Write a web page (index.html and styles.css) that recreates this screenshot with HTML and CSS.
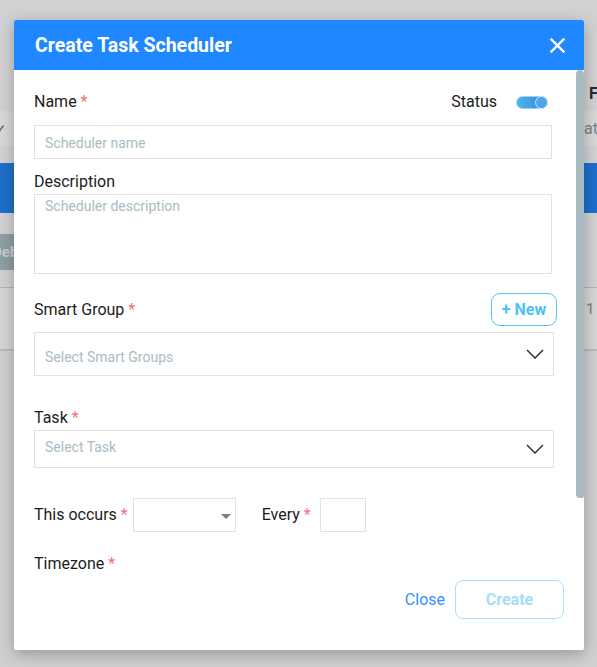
FILE: index.html
```html
<!DOCTYPE html>
<html>
<head>
<meta charset="utf-8">
<link rel="stylesheet" href="styles.css">
</head>
<body>
<div class="page">
  <div class="page-top"><span></span><span class="page-head">Filter</span></div>
  <div class="page-toolbar"><span class="chev">✓</span><span class="at">atus</span></div>
  <div class="page-gap"></div>
  <div class="page-band"></div>
  <div class="page-chiprow"><span class="chip">Debug</span></div>
  <div class="page-row"><span></span><span class="one">1</span></div>
  <div class="page-foot"></div>
</div>

<div class="modal">
  <div class="modal-header">
    <h1 class="modal-title">Create Task Scheduler</h1>
    <button class="modal-close" aria-label="Close">
      <svg width="15" height="15" viewBox="0 0 15 15"><path d="M1.5 1.5 L13.5 13.5 M13.5 1.5 L1.5 13.5" stroke="#fff" stroke-width="2.4" stroke-linecap="square" fill="none"/></svg>
    </button>
  </div>
  <div class="modal-body">
    <div class="row-between name-row">
      <label class="label">Name <span class="req">*</span></label>
      <div class="status">
        <span class="label">Status</span>
        <span class="toggle"><span class="knob"></span></span>
      </div>
    </div>
    <div class="input name-input"><span class="ph">Scheduler name</span></div>

    <label class="label desc-label">Description</label>
    <div class="input textarea"><span class="ph">Scheduler description</span></div>

    <div class="row-between group-row">
      <label class="label">Smart Group <span class="req">*</span></label>
      <button class="btn-new">+ New</button>
    </div>
    <div class="select select-group">
      <span class="ph">Select Smart Groups</span>
      <svg class="chevron" width="18" height="10" viewBox="0 0 18 10"><path d="M1 1 L9 9 L17 1" stroke="#333" stroke-width="1.5" fill="none"/></svg>
    </div>

    <label class="label task-label">Task <span class="req">*</span></label>
    <div class="select select-task">
      <span class="ph">Select Task</span>
      <svg class="chevron" width="18" height="10" viewBox="0 0 18 10"><path d="M1 1 L9 9 L17 1" stroke="#333" stroke-width="1.5" fill="none"/></svg>
    </div>

    <div class="occurs-row">
      <label class="label">This occurs <span class="req">*</span></label>
      <div class="mini-select"><span class="caret"></span></div>
      <label class="label every-label">Every <span class="req">*</span></label>
      <div class="mini-input"></div>
    </div>

    <label class="label tz-label">Timezone <span class="req">*</span></label>

    <div class="footer">
      <button class="btn-close">Close</button>
      <button class="btn-create">Create</button>
    </div>

    <div class="scroll-thumb"></div>
  </div>
</div>
</body>
</html>
```

FILE: styles.css
```css
* { box-sizing: border-box; }
html, body { margin: 0; padding: 0; }
body {
  width: 597px;
  height: 667px;
  overflow: hidden;
  background: #d2d2d4;
  font-family: Roboto, "Liberation Sans", sans-serif;
  position: relative;
}

/* background page (dimmed) */
.page {
  width: 597px;
  height: 667px;
  overflow: hidden;
  display: flex;
  flex-direction: column;
  background: #d2d2d4;
}
.page-top {
  height: 111px;
  display: grid;
  grid-template-columns: 589px 1fr;
  align-items: end;
  padding-bottom: 8px;
}
.page-head {
  font-size: 16px;
  font-weight: 700;
  color: #2a2a2e;
  white-space: nowrap;
}
.page-toolbar {
  height: 35px;
  background: #d8d8d9;
  display: grid;
  grid-template-columns: 584px 1fr;
  align-items: center;
}
.chev {
  font-size: 12px;
  color: #444;
  margin-left: -4px;
}
.at {
  font-size: 16px;
  color: #808083;
  white-space: nowrap;
}
.page-gap { height: 17px; }
.page-band { height: 50px; background: #1e6fcc; }
.page-chiprow {
  height: 75px;
  padding-top: 21px;
  border-bottom: 1px solid #b4b4b6;
}
.chip {
  display: inline-block;
  height: 36px;
  line-height: 36px;
  background: #8e9fa5;
  color: #c8d0d3;
  font-weight: 700;
  font-size: 15px;
  padding: 0 6px;
  margin-left: -14px;
}
.page-row {
  height: 63px;
  background: #d6d6d7;
  display: grid;
  grid-template-columns: 586px 1fr;
  padding-top: 12px;
  border-bottom: 2px solid #bcbcbe;
}
.one { font-size: 15px; color: #7a7a7c; }
.page-foot { flex: 1; background: #d0d0d2; }

/* modal */
.modal {
  position: absolute;
  left: 14px;
  top: 20px;
  width: 570px;
  height: 630px;
  background: #fff;
  border-radius: 2px;
  box-shadow: 0 4px 16px rgba(0, 0, 0, 0.28);
  display: flex;
  flex-direction: column;
  overflow: hidden;
}
.modal-header {
  height: 50px;
  flex: none;
  background: #1f87ff;
  display: flex;
  align-items: center;
  justify-content: space-between;
  padding: 0 19px 0 21px;
}
.modal-title {
  margin: 0;
  font-size: 19.5px;
  font-weight: 700;
  color: #fff;
}
.modal-close {
  border: 0;
  background: none;
  padding: 0;
  width: 15px;
  height: 15px;
  display: flex;
}

.modal-body {
  position: relative;
  flex: 1;
  padding: 22px 30px 0 20px;
  display: flex;
  flex-direction: column;
}
.label {
  font-size: 16px;
  line-height: 20px;
  color: #1c1c1c;
}
.req { color: #f66f7a; }
.ph {
  font-size: 14px;
  color: #a9bbc3;
}
.row-between {
  display: flex;
  justify-content: space-between;
  align-items: center;
}
.name-row { height: 20px; }
.status {
  display: flex;
  align-items: center;
  gap: 19px;
  margin-right: 6px;
}
.toggle {
  position: relative;
  width: 32px;
  height: 13px;
  border-radius: 7px;
  background: linear-gradient(90deg, #52b4ec, #2f86d6);
  border: 1px solid #9ccff3;
  display: flex;
  justify-content: flex-end;
  align-items: center;
}
.knob {
  width: 13px;
  height: 13px;
  border-radius: 50%;
  border: 1.5px solid #cbe7fb;
  background: #4aa6e8;
  margin-right: -1px;
}

.input {
  border: 1px solid #e2e2e2;
  padding: 0 10px;
  display: flex;
}
.name-input {
  margin-top: 13px;
  height: 34px;
  align-items: center;
  margin-right: 2px;
}
.name-input .ph { padding-top: 2px; }
.desc-label { margin-top: 13px; }
.textarea {
  margin-top: 2px;
  height: 80px;
  margin-right: 2px;
  align-items: flex-start;
  padding-top: 3px;
}

.group-row {
  margin-top: 19px;
  height: 33px;
}
.btn-new {
  height: 33px;
  width: 66px;
  border: 1px solid #5bc6f5;
  border-radius: 9px;
  background: #fff;
  color: #4ec2f6;
  font-family: Roboto, "Liberation Sans", sans-serif;
  font-size: 16px;
  font-weight: 700;
  margin-right: -3px;
  padding: 0;
}

.select {
  border: 1px solid #e2e2e2;
  display: flex;
  align-items: center;
  justify-content: space-between;
  padding: 0 9px 0 10px;
}
.chevron { flex: none; }
.select-group {
  margin-top: 6px;
  height: 44px;
}
.select-group .ph { padding-top: 5px; }
.task-label { margin-top: 32px; }
.select-task {
  margin-top: 2px;
  height: 38px;
}
.select-task .ph { padding-bottom: 4px; }

.occurs-row {
  margin-top: 30px;
  height: 34px;
  display: flex;
  align-items: center;
}
.mini-select {
  margin-left: 5px;
  width: 103px;
  height: 34px;
  border: 1px solid #e2e2e2;
  display: flex;
  align-items: center;
  justify-content: flex-end;
  padding-right: 4px;
}
.caret {
  width: 0;
  height: 0;
  border-left: 5px solid transparent;
  border-right: 5px solid transparent;
  border-top: 5px solid #7d7d7d;
  margin-top: 2px;
}
.every-label { margin-left: 26px; }
.mini-input {
  margin-left: 9px;
  width: 46px;
  height: 34px;
  border: 1px solid #e2e2e2;
}

.tz-label { margin-top: 22px; }

.footer {
  margin-top: 6px;
  margin-right: -10px;
  display: flex;
  justify-content: flex-end;
  align-items: center;
  gap: 10px;
}
.btn-close {
  border: 0;
  background: none;
  padding: 0;
  color: #3391ff;
  font-family: Roboto, "Liberation Sans", sans-serif;
  font-size: 16px;
}
.btn-create {
  width: 109px;
  height: 39px;
  border: 1px solid #a8e0fb;
  border-radius: 8px;
  background: #fff;
  color: #a4dcfa;
  font-family: Roboto, "Liberation Sans", sans-serif;
  font-size: 16px;
  font-weight: 700;
  padding: 0;
}

.scroll-thumb {
  position: absolute;
  right: 0;
  top: 0;
  width: 8px;
  height: 428px;
  background: #a8bbc0;
  border-radius: 4px 4px 2px 4px;
}
```
